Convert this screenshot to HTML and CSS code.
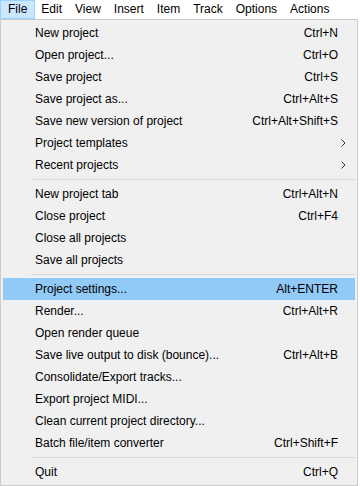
FILE: index.html
```html
<!DOCTYPE html>
<html>
<head>
    <meta charset="UTF-8">
    <title>File menu</title>
    <link rel="stylesheet" href="styles.css">
</head>
<body>
    <div class="menubar">
        <span class="menubar-item open">File</span>
        <span class="menubar-item">Edit</span>
        <span class="menubar-item">View</span>
        <span class="menubar-item">Insert</span>
        <span class="menubar-item">Item</span>
        <span class="menubar-item">Track</span>
        <span class="menubar-item">Options</span>
        <span class="menubar-item">Actions</span>
    </div>
    <div class="menu">
        <div class="menu-row"><span>New project</span><span class="key">Ctrl+N</span></div>
        <div class="menu-row"><span>Open project...</span><span class="key">Ctrl+O</span></div>
        <div class="menu-row"><span>Save project</span><span class="key">Ctrl+S</span></div>
        <div class="menu-row"><span>Save project as...</span><span class="key">Ctrl+Alt+S</span></div>
        <div class="menu-row"><span>Save new version of project</span><span class="key">Ctrl+Alt+Shift+S</span></div>
        <div class="menu-row sub"><span>Project templates</span>
            <svg class="arrow" width="5" height="8" viewBox="0 0 5 8"><polyline points="0.5,0.5 4,4 0.5,7.5" fill="none" stroke="#333" stroke-width="1"/></svg>
        </div>
        <div class="menu-row sub"><span>Recent projects</span>
            <svg class="arrow" width="5" height="8" viewBox="0 0 5 8"><polyline points="0.5,0.5 4,4 0.5,7.5" fill="none" stroke="#333" stroke-width="1"/></svg>
        </div>
        <div class="menu-sep"></div>
        <div class="menu-row"><span>New project tab</span><span class="key">Ctrl+Alt+N</span></div>
        <div class="menu-row"><span>Close project</span><span class="key">Ctrl+F4</span></div>
        <div class="menu-row"><span>Close all projects</span></div>
        <div class="menu-row"><span>Save all projects</span></div>
        <div class="menu-sep"></div>
        <div class="menu-row active"><span>Project settings...</span><span class="key">Alt+ENTER</span></div>
        <div class="menu-row"><span>Render...</span><span class="key">Ctrl+Alt+R</span></div>
        <div class="menu-row"><span>Open render queue</span></div>
        <div class="menu-row"><span>Save live output to disk (bounce)...</span><span class="key">Ctrl+Alt+B</span></div>
        <div class="menu-row"><span>Consolidate/Export tracks...</span></div>
        <div class="menu-row"><span>Export project MIDI...</span></div>
        <div class="menu-row"><span>Clean current project directory...</span></div>
        <div class="menu-row"><span>Batch file/item converter</span><span class="key">Ctrl+Shift+F</span></div>
        <div class="menu-sep"></div>
        <div class="menu-row"><span>Quit</span><span class="key">Ctrl+Q</span></div>
    </div>
</body>
</html>
```

FILE: styles.css
```css
body {
    margin: 0;
    background-color: #fff;
    color: #000;
    font-family: "Liberation Sans", Arial, sans-serif;
    font-size: 12px;
}

.menubar {
    display: flex;
    height: 19px;
    background-color: #fff;
}

.menubar-item {
    box-sizing: border-box;
    height: 19px;
    line-height: 17px;
    padding: 0 5.5px;
    border: 1px solid transparent;
}

.menubar-item.open {
    padding: 0 6.5px 0 7px;
    background-color: #cce8ff;
    border-color: #99d1ff;
}

.menu {
    box-sizing: border-box;
    width: 358px;
    padding: 2px;
    border: 1px solid #cccccc;
    background-color: #f0f0f0;
}

.menu-row {
    display: flex;
    justify-content: space-between;
    align-items: center;
    height: 22px;
    padding: 0 17px 0 32px;
}

.menu-row.active {
    background-color: #91c9f7;
}

.menu-row.sub {
    padding-right: 9px;
}

.menu-sep {
    height: 7px;
    margin-left: 28px;
    display: flex;
    align-items: center;
}

.menu-sep::before {
    content: "";
    flex: 1;
    height: 1px;
    background-color: #d7d7d7;
}
```
